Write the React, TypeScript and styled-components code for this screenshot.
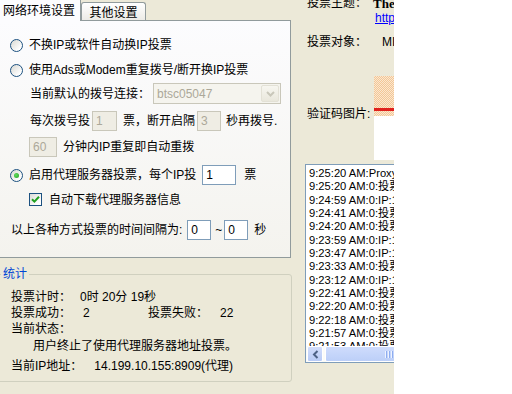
import styled, { createGlobalStyle, css } from 'styled-components';

const GlobalStyle = createGlobalStyle`
  html, body {
    margin: 0;
    padding: 0;
    background: #fff;
  }
  body {
    font-family: 'Liberation Sans', 'Noto Sans CJK SC', sans-serif;
    font-size: 12px;
    line-height: 14px;
    color: #000;
  }
`;

const Window = styled.div`
  width: 394px;
  height: 394px;
  overflow: hidden;
  background: #ece9d8;
  display: grid;
  grid-template-columns: 291px minmax(0, 1fr);
  align-items: start;
`;

const LeftCol = styled.div`
  width: 297px;
  margin-left: -6px;
  display: flex;
  flex-direction: column;
`;

const TabStrip = styled.div`
  display: flex;
  align-items: flex-end;
  height: 20px;
`;

const Tab = styled.div<{ $active?: boolean }>`
  display: flex;
  align-items: center;
  box-sizing: border-box;
  border: 1px solid #919b9c;
  border-bottom: none;
  border-radius: 3px 3px 0 0;
  white-space: nowrap;
  ${(p) =>
    p.$active
      ? css`
          position: relative;
          z-index: 1;
          width: 87px;
          height: 24px;
          margin-bottom: -1px;
          padding: 0 6px 0 8px;
          border-top: 3px solid #ffc83c;
          background: #fcfcfe;
        `
      : css`
          width: 65px;
          height: 18px;
          padding-top: 2px;
          justify-content: center;
          background: linear-gradient(#ffffff, #ecebe6);
        `}
`;

const Panel = styled.div`
  box-sizing: border-box;
  height: 238px;
  border: 1px solid #919b9c;
  background: linear-gradient(#fcfcfe, #f4f3ee);
  padding: 14px 0 0 15px;
  display: flex;
  flex-direction: column;
`;

const Row = styled.div<{ $h: number; $mt?: number; $indent?: number }>`
  display: flex;
  align-items: center;
  white-space: nowrap;
  height: ${(p) => p.$h}px;
  margin-top: ${(p) => p.$mt ?? 0}px;
  padding-left: ${(p) => p.$indent ?? 0}px;
`;

const Radio = styled.span<{ $on?: boolean }>`
  position: relative;
  flex: none;
  box-sizing: border-box;
  width: 13px;
  height: 13px;
  margin-right: 6px;
  border: 1px solid #1c5180;
  border-radius: 50%;
  background: linear-gradient(135deg, #d8d8d2, #ffffff 80%);
  ${(p) =>
    p.$on &&
    css`
      &::after {
        content: '';
        position: absolute;
        left: 3px;
        top: 3px;
        width: 5px;
        height: 5px;
        border-radius: 50%;
        background: radial-gradient(circle at 40% 40%, #62dd5e, #21a121);
      }
    `}
`;

const Check = styled.span`
  flex: none;
  box-sizing: border-box;
  width: 13px;
  height: 13px;
  margin-right: 7px;
  border: 1px solid #1c5180;
  background: linear-gradient(135deg, #dcdcd7, #ffffff 80%);
  display: flex;
  align-items: center;
  justify-content: center;
`;

const TextBox = styled.span<{ $w: number; $off?: boolean; $ml?: number; $mr?: number }>`
  display: inline-flex;
  align-items: center;
  flex: none;
  box-sizing: border-box;
  width: ${(p) => p.$w}px;
  height: 20px;
  padding-left: 3px;
  margin: 0 ${(p) => p.$mr ?? 6}px 0 ${(p) => p.$ml ?? 2}px;
  border: 1px solid ${(p) => (p.$off ? '#c9c7ba' : '#7f9db9')};
  background: ${(p) => (p.$off ? '#efede4' : '#ffffff')};
  color: ${(p) => (p.$off ? '#aca899' : '#000000')};
`;

const Combo = styled.div`
  display: flex;
  box-sizing: border-box;
  width: 128px;
  height: 21px;
  margin-left: 3px;
  border: 1px solid #c9c7ba;
  background: #f5f4ee;
  color: #aca899;
`;

const ComboText = styled.span`
  flex: 1;
  display: flex;
  align-items: center;
  padding-left: 3px;
`;

const ComboButton = styled.span`
  width: 16px;
  margin: 1px;
  border: 1px solid #e3e1d6;
  border-radius: 2px;
  background: linear-gradient(#f7f6f0, #e9e7dc);
  display: flex;
  align-items: center;
  justify-content: center;
`;

const Group = styled.fieldset`
  box-sizing: border-box;
  width: 298px;
  min-width: 0;
  margin: 9px 0 0 0;
  padding: 8px 0 5px 0;
  border: 1px solid #d0d0bf;
  border-radius: 3px;
`;

const Legend = styled.legend`
  margin-left: 6px;
  padding: 0 2px;
  color: #0046d5;
  line-height: 14px;
`;

const StatCell = styled.span<{ $w?: number }>`
  display: inline-flex;
  width: ${(p) => (p.$w ? `${p.$w}px` : 'auto')};
`;

const StatLabel = styled.span<{ $gap?: number }>`
  margin-right: ${(p) => p.$gap ?? 12}px;
`;

const RightCol = styled.div`
  margin-top: -4px;
  padding-left: 16px;
  display: flex;
  flex-direction: column;
  white-space: nowrap;
`;

const InfoRow = styled.div<{ $mt?: number }>`
  display: flex;
  align-items: flex-start;
  line-height: 15px;
  margin-top: ${(p) => p.$mt ?? 0}px;
`;

const InfoLabel = styled.span<{ $mt?: number }>`
  flex: none;
  width: 66px;
  margin-top: ${(p) => p.$mt ?? 0}px;
`;

const InfoValue = styled.span<{ $pad?: number; $bold?: boolean }>`
  padding-left: ${(p) => p.$pad ?? 0}px;
  ${(p) =>
    p.$bold &&
    css`
      font-family: 'Liberation Serif', serif;
      font-size: 13px;
      font-weight: bold;
    `}
`;

const Link = styled.a`
  color: #0000ff;
  text-decoration: underline;
`;

const Captcha = styled.div`
  width: 120px;
  height: 84px;
  margin-left: 1px;
  background: #ffffff;
`;

const CaptchaImage = styled.div`
  height: 40px;
  display: flex;
  flex-direction: column;
  background-color: #fae0c2;
  background-image: repeating-conic-gradient(#f3c796 0 25%, #fbe7d0 0 50%);
  background-size: 2px 2px;
`;

const RedStroke = styled.div`
  height: 3px;
  margin-top: 32px;
  background: #e0201c;
`;

const LogBox = styled.div`
  box-sizing: border-box;
  width: 200px;
  height: 199px;
  margin: 4px 0 0 -2px;
  border: 1px solid #7f9db9;
  background: #ffffff;
  display: flex;
  flex-direction: column;
`;

const LogLines = styled.div`
  flex: 1;
  overflow: hidden;
  padding: 2px 0 0 3px;
  font-size: 11.2px;
  line-height: 13.33px;
`;

const HScroll = styled.div`
  flex: none;
  height: 16px;
  display: flex;
  gap: 2px;
  padding-left: 1px;
  background: #fbfbf8;
`;

const ScrollButton = styled.span`
  box-sizing: border-box;
  width: 16px;
  border: 1px solid #ffffff;
  border-radius: 2px;
  background: linear-gradient(#d2ddfb, #b8cbf6);
  display: flex;
  align-items: center;
  justify-content: center;
`;

const ScrollThumb = styled.span`
  box-sizing: border-box;
  width: 130px;
  border: 1px solid #ffffff;
  border-radius: 2px;
  background: linear-gradient(#cfdcfc, #bccff8);
  display: flex;
  align-items: center;
  justify-content: center;
  gap: 1px;
`;

const Grip = styled.span`
  width: 1px;
  height: 7px;
  background: #eef3fe;
  box-shadow: 1px 0 0 #8eadf0;
  margin-right: 1px;
`;

const logs = [
  '9:25:20 AM:Proxy list downloaded',
  '9:25:20 AM:0:投票失败',
  '9:24:59 AM:0:IP:14.199.10.155',
  '9:24:41 AM:0:投票失败',
  '9:24:20 AM:0:投票失败',
  '9:23:59 AM:0:IP:125.39.66.67',
  '9:23:47 AM:0:IP:119.70.40.101',
  '9:23:33 AM:0:投票失败',
  '9:23:12 AM:0:IP:175.136.226.38',
  '9:22:41 AM:0:投票失败',
  '9:22:20 AM:0:投票成功',
  '9:22:18 AM:0:投票失败',
  '9:21:57 AM:0:投票失败',
  '9:21:53 AM:0:投票失败',
];

const App = () => {
  return (
    <>
      <GlobalStyle />
      <Window>
        <LeftCol>
          <TabStrip>
            <Tab $active>网络环境设置</Tab>
            <Tab>其他设置</Tab>
          </TabStrip>
          <Panel>
            <Row $h={20}>
              <Radio />
              不换IP或软件自动换IP投票
            </Row>
            <Row $h={20} $mt={5}>
              <Radio />
              使用Ads或Modem重复拨号/断开换IP投票
            </Row>
            <Row $h={21} $mt={3} $indent={20}>
              当前默认的拨号连接：
              <Combo>
                <ComboText>btsc05047</ComboText>
                <ComboButton>
                  <svg width="9" height="6" viewBox="0 0 9 6">
                    <path d="M1 1 L4.5 4.5 L8 1" stroke="#c9c7ba" strokeWidth="2" fill="none" />
                  </svg>
                </ComboButton>
              </Combo>
            </Row>
            <Row $h={20} $mt={7} $indent={20}>
              每次拨号投
              <TextBox $w={25} $off>1</TextBox>
              票，断开启隔
              <TextBox $w={24} $off $mr={5}>3</TextBox>
              秒再拨号.
            </Row>
            <Row $h={19} $mt={6} $indent={19}>
              <TextBox $w={28} $off $ml={0} $mr={6}>60</TextBox>
              分钟内IP重复即自动重拨
            </Row>
            <Row $h={20} $mt={9}>
              <Radio $on />
              启用代理服务器投票，每个IP投
              <TextBox $w={34} $ml={6} $mr={8}>1</TextBox>
              票
            </Row>
            <Row $h={15} $mt={7} $indent={19}>
              <Check>
                <svg width="9" height="9" viewBox="0 0 9 9">
                  <path d="M1 4.2 L3.4 6.6 L8 1.8" stroke="#21a121" strokeWidth="2" fill="none" />
                </svg>
              </Check>
              自动下载代理服务器信息
            </Row>
            <Row $h={20} $mt={13} $indent={1}>
              以上各种方式投票的时间间隔为:
              <TextBox $w={24} $ml={5} $mr={4}>0</TextBox>
              ~
              <TextBox $w={24} $ml={2} $mr={6}>0</TextBox>
              秒
            </Row>
          </Panel>
          <Group>
            <Legend>统计</Legend>
            <Row $h={16} $indent={16}>
              <StatLabel $gap={9}>投票计时：</StatLabel>0时 20分 19秒
            </Row>
            <Row $h={15} $indent={16}>
              <StatCell $w={137}>
                <StatLabel>投票成功：</StatLabel>2
              </StatCell>
              <StatCell>
                <StatLabel>投票失败：</StatLabel>22
              </StatCell>
            </Row>
            <Row $h={17} $indent={16}>
              当前状态：
            </Row>
            <Row $h={18} $indent={38}>
              用户终止了使用代理服务器地址投票。
            </Row>
            <Row $h={21} $indent={16}>
              <StatLabel>当前IP地址：</StatLabel>14.199.10.155:8909(代理)
            </Row>
          </Group>
        </LeftCol>
        <RightCol>
          <InfoRow>
            <InfoLabel>投票主题：</InfoLabel>
            <InfoValue $bold>The Most Popular Vote</InfoValue>
          </InfoRow>
          <InfoRow>
            <InfoLabel />
            <InfoValue $pad={2}>
              <Link href="#">http://vote.example.com/</Link>
            </InfoValue>
          </InfoRow>
          <InfoRow $mt={9}>
            <InfoLabel>投票对象：</InfoLabel>
            <InfoValue $pad={9}>MIKE</InfoValue>
          </InfoRow>
          <InfoRow $mt={26}>
            <InfoLabel $mt={31}>验证码图片:</InfoLabel>
            <Captcha>
              <CaptchaImage>
                <RedStroke />
              </CaptchaImage>
            </Captcha>
          </InfoRow>
          <LogBox>
            <LogLines>
              {logs.map((line, i) => (
                <div key={i}>{line}</div>
              ))}
            </LogLines>
            <HScroll>
              <ScrollButton>
                <svg width="7" height="9" viewBox="0 0 7 9">
                  <path d="M5.5 1 L2 4.5 L5.5 8" stroke="#4d6185" strokeWidth="2" fill="none" />
                </svg>
              </ScrollButton>
              <ScrollThumb>
                <Grip />
                <Grip />
                <Grip />
                <Grip />
              </ScrollThumb>
            </HScroll>
          </LogBox>
        </RightCol>
      </Window>
    </>
  );
};

export default App;
